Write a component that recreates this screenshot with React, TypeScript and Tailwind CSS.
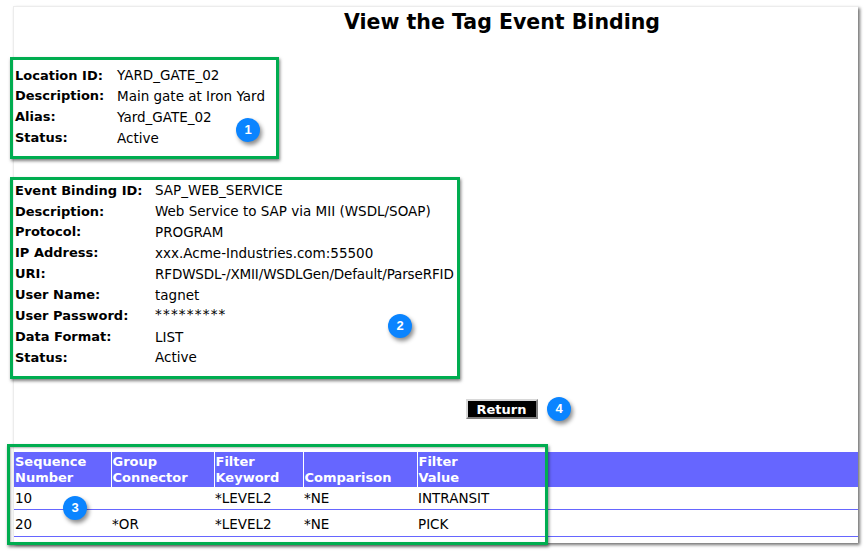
import React from 'react';

const font = { fontFamily: '"DejaVu Sans", Verdana, sans-serif' };

const locationRows = [
  ['Location ID:', 'YARD_GATE_02'],
  ['Description:', 'Main gate at Iron Yard'],
  ['Alias:', 'Yard_GATE_02'],
  ['Status:', 'Active'],
];

const bindingRows = [
  ['Event Binding ID:', 'SAP_WEB_SERVICE'],
  ['Description:', 'Web Service to SAP via MII (WSDL/SOAP)'],
  ['Protocol:', 'PROGRAM'],
  ['IP Address:', 'xxx.Acme-Industries.com:55500'],
  ['URI:', 'RFDWSDL-/XMII/WSDLGen/Default/ParseRFID'],
  ['User Name:', 'tagnet'],
  ['User Password:', '*********'],
  ['Data Format:', 'LIST'],
  ['Status:', 'Active'],
];

const valueClass = (label: string) => {
  if (label === 'URI:') return 'text-[13.5px] tracking-[-0.13px]';
  if (label === 'User Password:') return 'text-[13.5px] tracking-[1.2px] -translate-y-[2px]';
  return 'text-[13.5px]';
};

const Badge: React.FC<{ n: number; className: string }> = ({ n, className }) => (
  <div
    className={`absolute flex h-6 w-6 items-center justify-center rounded-full bg-[#0a84ff] text-[13px] font-bold text-white shadow-[2px_3px_4px_rgba(0,0,0,0.45)] ${className}`}
    style={{ fontFamily: '"Liberation Sans", Arial, sans-serif' }}
  >
    {n}
  </div>
);

const App: React.FC = () => {
  return (
    <div className="relative h-[554px] w-[868px] overflow-hidden bg-white text-[13px] text-black" style={font}>
      <div className="ml-[13px] mt-[6px] h-[537px] w-[845px] border-l border-t border-[#ececec] bg-white shadow-[2px_2px_3px_rgba(0,0,0,0.55)]">
        <h1 className="ml-[132px] h-[45px] pt-[1px] text-center text-[20.5px] leading-[29px] font-bold">View the Tag Event Binding</h1>

        <div className="-ml-[4px] mt-[5px] h-[102px] w-[269px] border-[3px] border-[#00ad50] pl-[2px] pt-[5px] shadow-[1px_2px_3px_rgba(0,0,0,0.5)]">
          {locationRows.map(([label, value]) => (
            <div key={label} className="flex h-[20.8px] items-center whitespace-nowrap">
              <span className="w-[102px] font-bold">{label}</span>
              <span className="text-[13.5px]">{value}</span>
            </div>
          ))}
        </div>

        <div className="-ml-[4px] mt-[18px] h-[202px] w-[450px] border-[3px] border-[#00ad50] pl-[2px] shadow-[1px_2px_3px_rgba(0,0,0,0.5)]">
          {bindingRows.map(([label, value]) => (
            <div key={label} className="flex h-[20.9px] items-center whitespace-nowrap">
              <span className="w-[140px] font-bold">{label}</span>
              <span className={valueClass(label)}>{value}</span>
            </div>
          ))}
        </div>

        <div className="ml-[131px] mt-[20px] flex justify-center">
          <button className="h-[20px] w-[72px] border-2 border-t-[#d8d8d8] border-l-[#d8d8d8] border-r-[#808080] border-b-[#808080] bg-black text-[13px] leading-none font-bold text-white">
            Return
          </button>
        </div>

        <table className="mt-[33px] w-[844px] table-fixed border-collapse">
          <colgroup>
            <col className="w-[97px]" />
            <col className="w-[103px]" />
            <col className="w-[89px]" />
            <col className="w-[114px]" />
            <col />
          </colgroup>
          <thead>
            <tr className="h-[35px] bg-[#6666ff] text-left align-bottom leading-[16px] font-bold text-white">
              <th className="border-r border-white px-[1px] pb-[1px]">Sequence<br />Number</th>
              <th className="border-r border-white px-[1px] pb-[1px]">Group<br />Connector</th>
              <th className="border-r border-white px-[1px] pb-[1px]">Filter<br />Keyword</th>
              <th className="border-r border-white px-[1px] pb-[1px]">Comparison</th>
              <th className="px-[1px] pb-[1px]">Filter<br />Value</th>
            </tr>
          </thead>
          <tbody className="text-[13.5px]">
            <tr className="h-[22px] border-b border-[#6666ff]">
              <td className="px-[1px]">10</td>
              <td className="px-[1px]"></td>
              <td className="px-[1px]">*LEVEL2</td>
              <td className="px-[1px]">*NE</td>
              <td className="px-[1px]">INTRANSIT</td>
            </tr>
            <tr className="h-[27px] border-b border-[#6666ff]">
              <td className="px-[1px] pt-[3px]">20</td>
              <td className="px-[1px] pt-[3px]">*OR</td>
              <td className="px-[1px] pt-[3px]">*LEVEL2</td>
              <td className="px-[1px] pt-[3px]">*NE</td>
              <td className="px-[1px] pt-[3px]">PICK</td>
            </tr>
          </tbody>
        </table>
      </div>

      {/* annotation frame over the table */}
      <div className="absolute left-[7px] top-[444px] h-[101px] w-[541px] border-[3px] border-[#00ad50] shadow-[1px_2px_3px_rgba(0,0,0,0.5),inset_1px_1px_2px_rgba(0,0,0,0.3)]" />

      <Badge n={1} className="left-[236px] top-[118px]" />
      <Badge n={2} className="left-[388px] top-[314px]" />
      <Badge n={3} className="left-[63px] top-[496px]" />
      <Badge n={4} className="left-[547px] top-[397px]" />
    </div>
  );
};

export default App;
